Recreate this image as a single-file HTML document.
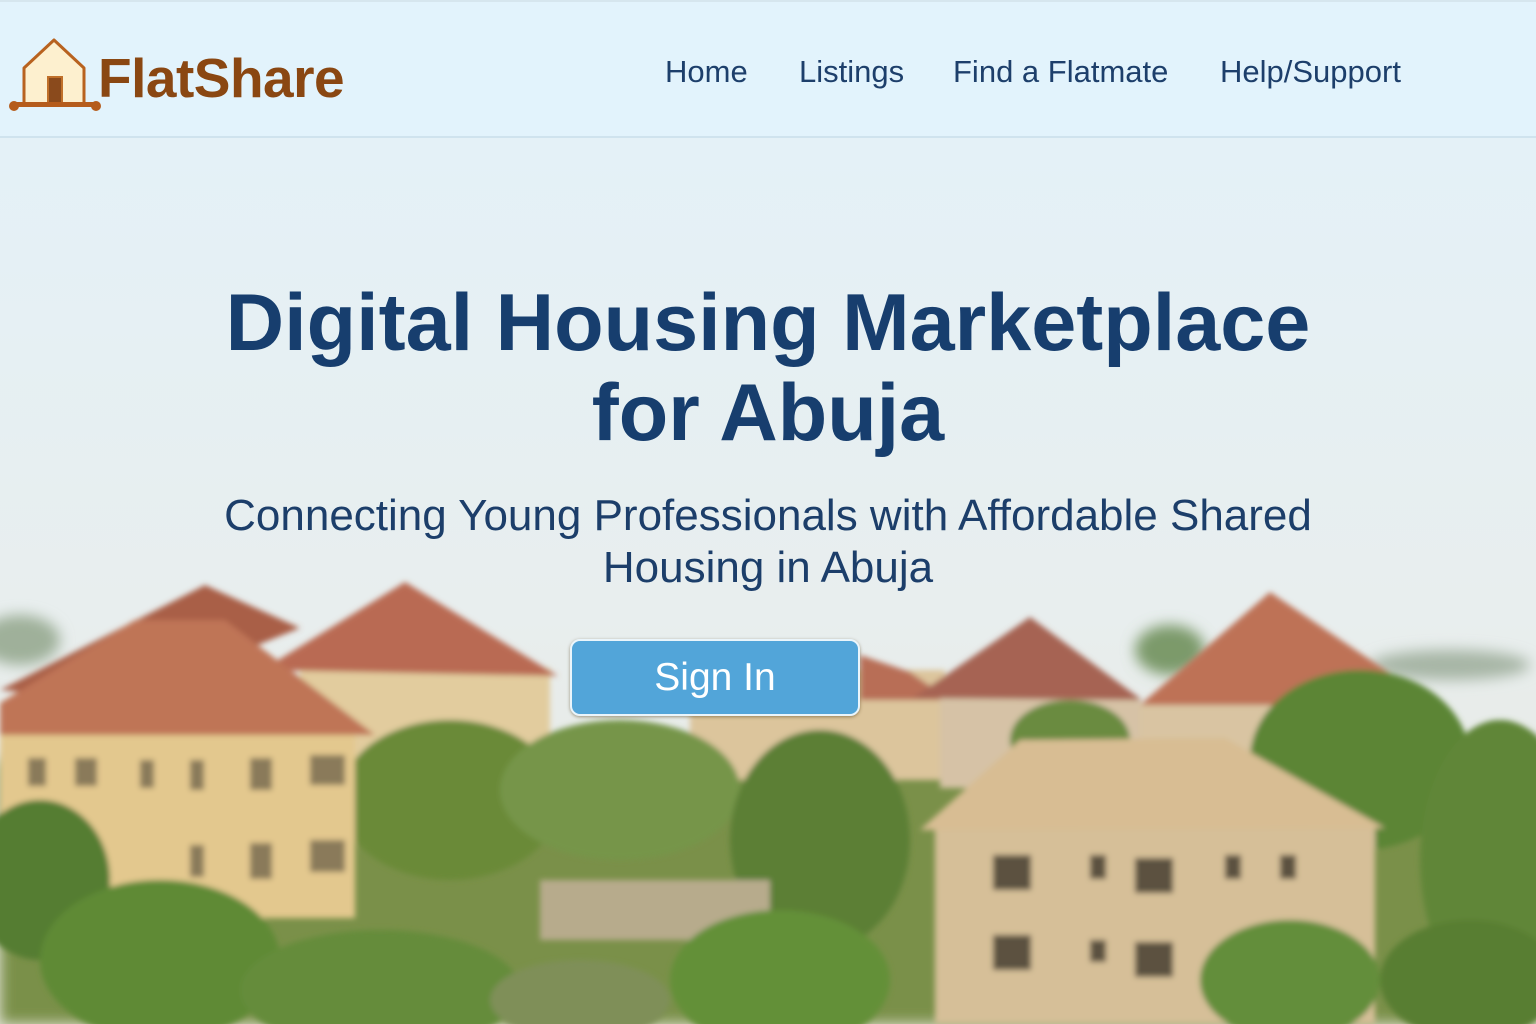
<!DOCTYPE html>
<html><head><meta charset="utf-8"><style>
*{margin:0;padding:0;box-sizing:border-box}
body{width:1536px;height:1024px;overflow:hidden;position:relative;font-family:"Liberation Sans",sans-serif;background:#e6eef0}
#bg{position:absolute;left:0;top:0}
header{position:absolute;left:0;top:0;width:1536px;height:138px;background:#e2f3fc;border-bottom:2px solid #cfe3ee;border-top:2px solid #d6e6ee}
.logo{position:absolute;left:98px;top:44px;font-size:55px;font-weight:bold;color:#8a4712;letter-spacing:-0.5px}
nav a{position:absolute;top:52px;font-size:31px;color:#1d3f6b;text-decoration:none}
h1{position:absolute;left:0;width:1536px;top:278px;text-align:center;font-size:81px;line-height:90px;color:#173e6e;font-weight:bold}
.sub{position:absolute;left:0;width:1536px;top:490px;text-align:center;font-size:44px;line-height:52px;color:#1c3e6a}
.btn{position:absolute;left:570px;top:639px;width:290px;height:77px;background:#52a5d9;border:2px solid #eaf5fb;border-radius:10px;color:#fff;font-size:39px;text-align:center;line-height:73px;box-shadow:0 1px 3px rgba(80,60,20,.5)}
</style></head><body>
<svg id="bg" width="1536" height="1024" viewBox="0 0 1536 1024">
<defs>
<linearGradient id="sky" x1="0" y1="0" x2="0" y2="1"><stop offset="0" stop-color="#e3f2fa"/><stop offset="0.6" stop-color="#e8eeee"/><stop offset="1" stop-color="#e7e6dc"/></linearGradient>
<filter id="b"><feGaussianBlur stdDeviation="3"/></filter>
<filter id="b2"><feGaussianBlur stdDeviation="7"/></filter>
</defs>
<rect width="1536" height="1024" fill="url(#sky)"/>
<g filter="url(#b2)">
<ellipse cx="20" cy="640" rx="40" ry="25" fill="#9fb09a"/>
<ellipse cx="1170" cy="650" rx="35" ry="25" fill="#7c9a6a"/>
<ellipse cx="1450" cy="665" rx="80" ry="15" fill="#a7b6a6"/>
<rect x="0" y="760" width="1536" height="264" fill="#7a9048"/>
</g>
<g filter="url(#b)">
<polygon points="0,690 205,585 300,628 120,700" fill="#a95e47"/>
<rect x="300" y="668" width="250" height="100" fill="#e2cc9e"/>
<polygon points="262,670 405,582 558,676" fill="#b96b52"/>
<rect x="690" y="670" width="255" height="110" fill="#dcc59c"/>
<polygon points="860,655 910,672 950,700 860,700" fill="#b86e57"/>
<rect x="940" y="698" width="200" height="90" fill="#d6c2a6"/>
<polygon points="913,698 1030,617 1142,700" fill="#a66452"/>
<rect x="1140" y="703" width="285" height="60" fill="#d9c4a2"/>
<polygon points="1140,705 1270,592 1437,705" fill="#be7257"/>
<rect x="1430" y="740" width="70" height="120" fill="#e0cba4"/>
<polygon points="1425,740 1460,738 1515,792 1430,792" fill="#c27658"/>
<ellipse cx="450" cy="800" rx="110" ry="80" fill="#6a8a38"/>
<ellipse cx="620" cy="790" rx="120" ry="70" fill="#76954a"/>
<ellipse cx="820" cy="840" rx="90" ry="110" fill="#5c7f35"/>
<ellipse cx="1070" cy="740" rx="60" ry="40" fill="#6a8b40"/>
<ellipse cx="1360" cy="760" rx="110" ry="90" fill="#5c8535"/>
<ellipse cx="1500" cy="860" rx="80" ry="140" fill="#608638"/>
<rect x="540" y="880" width="230" height="60" fill="#b7ab8c"/>
<rect x="0" y="733" width="355" height="185" fill="#e3c88e"/>
<polygon points="0,703 135,620 225,620 375,735 0,735" fill="#bf7556"/>
<g fill="#8a7a5a">
<rect x="28" y="758" width="18" height="28"/><rect x="75" y="758" width="22" height="28"/><rect x="140" y="760" width="14" height="28"/><rect x="190" y="760" width="14" height="30"/><rect x="250" y="758" width="22" height="32"/><rect x="310" y="755" width="35" height="30"/>
<rect x="190" y="845" width="14" height="32"/><rect x="250" y="843" width="22" height="36"/><rect x="310" y="840" width="35" height="32"/>
</g>
<rect x="935" y="828" width="440" height="196" fill="#d6bf98"/>
<polygon points="920,830 1020,740 1225,738 1385,828" fill="#d8bd93"/>
<g fill="#5b5140">
<rect x="993" y="855" width="38" height="35"/><rect x="1090" y="855" width="16" height="24"/><rect x="1135" y="858" width="38" height="35"/><rect x="1225" y="855" width="16" height="24"/><rect x="1280" y="855" width="16" height="24"/>
<rect x="993" y="935" width="38" height="35"/><rect x="1090" y="940" width="16" height="22"/><rect x="1135" y="942" width="38" height="35"/><rect x="1230" y="940" width="14" height="30"/>
</g>
<ellipse cx="40" cy="880" rx="70" ry="80" fill="#557d30"/>
<ellipse cx="160" cy="960" rx="120" ry="80" fill="#5e8a35"/>
<ellipse cx="380" cy="990" rx="140" ry="60" fill="#658c3b"/>
<ellipse cx="780" cy="980" rx="110" ry="70" fill="#649038"/>
<ellipse cx="580" cy="1000" rx="90" ry="40" fill="#7f8f58"/>
<ellipse cx="1290" cy="980" rx="90" ry="60" fill="#638e3a"/>
<ellipse cx="1470" cy="980" rx="90" ry="60" fill="#587e32"/>
</g>
</svg>
<header>
<svg style="position:absolute;left:6px;top:34px" width="96" height="80" viewBox="0 0 96 80">
<polygon points="18,32 48,4 78,32 78,68 18,68" fill="#fdf0cf" stroke="#b8621f" stroke-width="3" stroke-linejoin="round"/>
<rect x="42" y="41" width="14" height="27" fill="#8a4a1c" stroke="#c0702a" stroke-width="2"/>
<rect x="6" y="66" width="88" height="5" rx="2.5" fill="#b55c1c"/>
<circle cx="8" cy="70" r="5" fill="#b55c1c"/><circle cx="90" cy="70" r="5" fill="#b55c1c"/>
</svg>
<div class="logo">FlatShare</div>
<nav><a style="left:665px">Home</a><a style="left:799px">Listings</a><a style="left:953px">Find a Flatmate</a><a style="left:1220px">Help/Support</a></nav>
</header>
<h1>Digital Housing Marketplace<br>for Abuja</h1>
<div class="sub">Connecting Young Professionals with Affordable Shared<br>Housing in Abuja</div>
<div class="btn">Sign In</div>
</body></html>
